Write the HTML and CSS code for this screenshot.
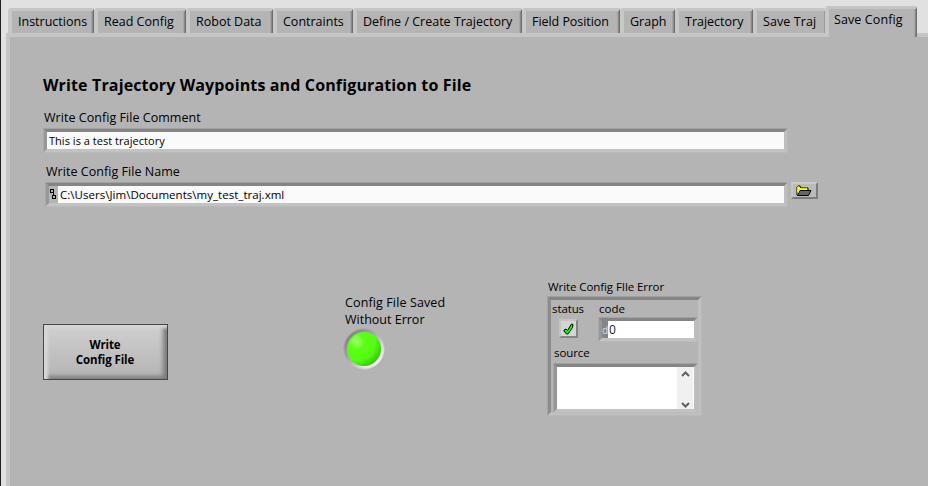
FILE: index.html
```html
<!DOCTYPE html>
<html lang="en">
<head>
<meta charset="utf-8">
<title>Save Config</title>
<link rel="stylesheet" href="styles.css">
</head>
<body>
<div class="window">
  <nav class="tabs">
    <div class="tab t-instructions"><span>Instructions</span></div>
    <div class="tab t-read"><span>Read Config</span></div>
    <div class="tab t-robot"><span>Robot Data</span></div>
    <div class="tab t-constraints"><span>Contraints</span></div>
    <div class="tab t-define"><span>Define / Create Trajectory</span></div>
    <div class="tab t-field"><span>Field Position</span></div>
    <div class="tab t-graph"><span>Graph</span></div>
    <div class="tab t-trajectory"><span>Trajectory</span></div>
    <div class="tab t-savetraj"><span>Save Traj</span></div>
    <div class="tab t-saveconfig active"><span>Save Config</span></div>
  </nav>
  <main class="panel">
    <h1><span>Write Trajectory Waypoints and Configuration to File</span></h1>
    <div class="label l-comment"><span>Write Config File Comment</span></div>
    <div class="sunken comment"><span>This is a test trajectory</span></div>
    <div class="label l-name"><span>Write Config File Name</span></div>
    <div class="file-row">
      <div class="sunken path">
        <div class="path-icon"><svg width="9" height="17" viewBox="0 0 9 17" fill="none" stroke="#000" shape-rendering="crispEdges"><path d="M1.500 3.500h3v3h-3zM4.500 6v3M3.500 9.500h3v3h-3z"/></svg></div>
        <div class="path-text"><span>C:\Users\Jim\Documents\my_test_traj.xml</span></div>
      </div>
      <div class="browse">
        <svg width="16" height="12" viewBox="0 0 16 12"><path d="M1 10V2l1-1h2l1 2h7v2" fill="#ff0" stroke="#000"/><path d="M1.500 10.500L4 5.500h11L12.500 10.500z" fill="#666" stroke="#000"/><path d="M2 1.500v6M2 4h9" stroke="#ff0" stroke-width="1.500"/></svg>
      </div>
    </div>
    <div class="lower">
      <div class="write"><b>Write</b><b class="second">Config File</b></div>
      <section class="saved">
        <div class="saved-text"><span>Config File Saved</span></div>
        <div class="saved-text without"><span>Without Error</span></div>
        <div class="led"><div class="lamp"></div></div>
      </section>
      <section class="error">
        <div class="error-title"><span>Write Config FIle Error</span></div>
        <div class="cluster">
          <div class="top">
            <div class="status">
              <div class="small-label s-status"><span>status</span></div>
              <div class="check"><svg width="11" height="12" viewBox="0 0 11 12"><path d="M1 7l2-1 1.500 1.500L8.500 1l1.500.5-.5 3L5 11H3.500L1 8z" fill="#0f0" stroke="#000"/></svg></div>
            </div>
            <div class="code">
              <div class="small-label s-code"><span>code</span></div>
              <div class="sunken number"><div class="radix">d</div><span>0</span></div>
            </div>
          </div>
          <div class="small-label s-source"><span>source</span></div>
          <div class="sunken source">
            <div class="scroll">
              <svg width="9" height="6" viewBox="0 0 9 6"><path d="M1 5l3.500-3.500L8 5" fill="none" stroke="#606060" stroke-width="2"/></svg>
              <svg width="9" height="6" viewBox="0 0 9 6"><path d="M1 1l3.500 3.500L8 1" fill="none" stroke="#606060" stroke-width="2"/></svg>
            </div>
          </div>
        </div>
      </section>
    </div>
  </main>
</div>
</body>
</html>
```
FILE: styles.css
```css
* { box-sizing: border-box; }
body {
  margin: 0;
  background: #e1e1e1;
  color: #000;
  font-family: "Open Sans", "Noto Sans", sans-serif;
  font-size: 12.5px;
  line-height: 16px;
}
span, b { white-space: nowrap; }
.window {
  height: 486px;
  overflow: hidden;
  display: flex;
  flex-direction: column;
  border-left: 1px solid #241e1c;
}
.tabs {
  display: flex;
  align-items: flex-end;
  height: 33px;
  padding-left: 7px;
  flex: none;
}
.tab {
  height: 25px;
  flex: none;
  display: flex;
  justify-content: flex-start;
  padding: 3px 0 0 6px;
  background: #b4b4b4;
  border: solid;
  border-width: 3px 1px 0 4px;
  border-color: #c5c5c5 #6c6c6c #b4b4b4 #c8c8c8;
  border-radius: 3px 2px 0 0;
  box-shadow: inset -1px 0 #8a8a8a, inset -2px 0 #a6a6a6;
}
.t-instructions { width: 86px; }
.t-read { width: 92px; }
.t-robot { width: 87px; }
.t-constraints { width: 80px; }
.t-define { width: 169px; }
.t-field { width: 98px; letter-spacing: -0.05px; }
.t-graph { width: 55px; }
.t-trajectory { width: 78px; }
.t-savetraj { width: 72px; border-right-width: 0; letter-spacing: 0.1px; }
.t-saveconfig { width: 92px; letter-spacing: 0.1px; }
.t-savetraj { box-shadow: inset -1px 0 #9a9a9a; }
.tab.active {
  height: 31px;
  margin-bottom: -4px;
  position: relative;
  padding: 3px 0 0 5px;
}
.panel {
  flex: 1;
  margin-left: 5px;
  background: #b4b4b4;
  border: solid #c5c5c5;
  border-width: 4px 0 0 4px;
  padding-left: 33px;
}
h1 {
  margin: 37px 0 0;
  font-size: 16px;
  line-height: 22px;
  height: 22px;
  letter-spacing: 0.14px;
}
.label { height: 16px; line-height: 18px; letter-spacing: 0.04px; }
.l-comment { margin: 13px 0 0 1px; }
.sunken {
  display: flex;
  background: #fafafa;
  border: 4px solid;
  border-color: #858585 #bebebe #c2c2c2 #979797;
  outline: 1px solid rgb(180 180 180 / 60%);
  outline-offset: -1px;
}
.comment {
  width: 745px;
  height: 25px;
  margin-top: 3px;
  padding-left: 2px;
  font-size: 11px;
  line-height: 18px;
  letter-spacing: 0.03px;
}
.l-name { margin: 10px 0 0 3px; }
.file-row {
  display: flex;
  gap: 3px;
  margin: 3px 0 0 2px;
}
.path { width: 743px; height: 25px; font-size: 11.5px; line-height: 18px; letter-spacing: 0.03px; }
.path-icon { width: 9px; background: #b4b4b4; }
.path-icon svg { display: block; }
.path-text { padding-left: 2px; }
.browse {
  width: 27px;
  height: 17px;
  background: #bbb;
  border: 2px solid;
  border-color: #ccc #7c7c7c #7c7c7c #c4c4c4;
  display: flex;
  align-items: center;
  justify-content: center;
}
.browse svg { margin-left: -1px; }
.lower {
  display: grid;
  grid-template-columns: 300px 204px 155px;
  margin-top: 72px;
}
.write {
  width: 125px;
  height: 56px;
  margin-top: 45px;
  border: 1px solid #464646;
  box-shadow: inset 4px 3px 3px #d7d7d7, inset -4px -3px 4px #7c7c7c;
  background: linear-gradient(#d0d0d0, #b4b4b4);
  display: flex;
  flex-direction: column;
  align-items: center;
  padding: 12px 1px 0 0;
  font-size: 11.5px;
  line-height: 15px;
  letter-spacing: -0.1px;
}
.saved { padding: 15px 0 0 2px; letter-spacing: 0.12px; }
.saved-text { height: 17px; line-height: 17px; }
.without { letter-spacing: 0; }
.led {
  width: 42px;
  height: 42px;
  margin: 0 0 0 -2px;
  padding: 4px;
  border-radius: 50%;
  background: radial-gradient(circle, transparent 19px, #b4b4b4 21px), linear-gradient(135deg, #808080 15%, #b4b4b4 50%, #fff 85%);
}
.lamp {
  width: 34px;
  height: 34px;
  border-radius: 50%;
  background: radial-gradient(circle at 28% 28%, #a6ff77 0, #5bff16 22%, #54fc10 55%, #35c900 78%, #146b00 100%);
}
.error-title { height: 16px; padding-left: 1px; font-size: 11.5px; letter-spacing: -0.08px; }
.cluster {
  width: 155px;
  height: 120px;
  margin-top: 1px;
  border: 4px solid;
  border-color: #858585 #c0c0c0 #c0c0c0 #8c8c8c;
  outline: 1px solid rgb(180 180 180 / 60%);
  outline-offset: -1px;
}
.top { display: flex; height: 42px; }
.status { width: 47px; padding-top: 1px; }
.small-label { height: 16px; padding-left: 1px; font-size: 11.5px; letter-spacing: -0.1px; }
.check {
  width: 19px;
  height: 19px;
  margin: 2px 0 0 8px;
  background: #d4d4d4;
  border: 2px solid;
  border-color: #c4c4c4 #858585 #858585 #c4c4c4;
  display: flex;
  align-items: center;
  justify-content: center;
}
.check svg { flex: none; }
.s-code { line-height: 15px; margin-top: 1px; letter-spacing: 0; }
.number { width: 100px; height: 25px; background: #fff; font-size: 12px; line-height: 18px; }
.number span { padding-left: 1px; color: #123; }
.radix { width: 6px; background: #858585; color: #ddd; font-size: 10px; }
.s-source { padding-left: 3px; margin-top: 4px; line-height: 14px; }
.source {
  width: 145px;
  height: 50px;
  margin: 1px 0 0 2px;
  background: #fff;
  justify-content: flex-end;
}
.scroll {
  width: 16px;
  margin-right: 1px;
  background: #f0f0f0;
  display: flex;
  flex-direction: column;
  align-items: center;
  justify-content: space-between;
  padding: 4px 0 1px;
}
```
